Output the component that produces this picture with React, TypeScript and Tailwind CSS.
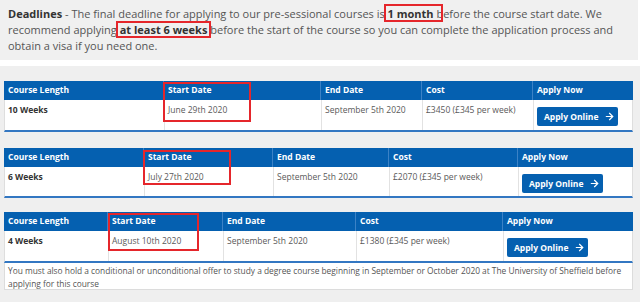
import React from 'react';
import { ArrowRight } from 'lucide-react';

type Course = {
  length: string;
  start: string;
  end: string;
  cost: string;
  cols: string;
  mark: string;
  bodyH: string;
  gap: string;
};

const COURSES: Course[] = [
  {
    length: '10 Weeks',
    start: 'June 29th 2020',
    end: 'September 5th 2020',
    cost: '£3450 (£345 per week)',
    cols: 'grid-cols-[159px_157px_101px_111px_101px]',
    mark: 'left-[159px] top-[1px] w-[88px] h-[40px]',
    bodyH: 'h-[32px]',
    gap: 'mt-[15px]',
  },
  {
    length: '6 Weeks',
    start: 'July 27th 2020',
    end: 'September 5th 2020',
    cost: '£2070 (£345 per week)',
    cols: 'grid-cols-[139px_129px_116px_129px_116px]',
    mark: 'left-[139px] top-[2px] w-[88px] h-[35px]',
    bodyH: 'h-[31px]',
    gap: 'mt-[16px]',
  },
  {
    length: '4 Weeks',
    start: 'August 10th 2020',
    end: 'September 5th 2020',
    cost: '£1380 (£345 per week)',
    cols: 'grid-cols-[103px_115px_133px_147px_131px]',
    mark: 'left-[104px] top-[1px] w-[91px] h-[38px]',
    bodyH: 'h-[32px]',
    gap: 'mt-[14px]',
  },
];

const HEADERS = ['Course Length', 'Start Date', 'End Date', 'Cost', 'Apply Now'];

// red annotation box drawn over a phrase, doesn't move the text
const Marked = ({ children, box }: { children: React.ReactNode; box: string }) => (
  <span className="relative font-bold text-[#333]">
    {children}
    <span className={`absolute border-2 border-[#e5262b] pointer-events-none ${box}`} />
  </span>
);

const CourseTable = ({ c }: { c: Course }) => (
  <div className={`relative w-[629px] ${c.gap}`}>
    <div className={`grid ${c.cols} h-[19px] bg-[#0560b0] text-white font-bold text-[8.5px]`}>
      {HEADERS.map((h, i) => (
        <div key={h} className={`flex items-center pl-[4px] ${i > 0 ? 'border-l border-[#3c82c6]' : ''}`}>
          {h}
        </div>
      ))}
    </div>
    <div className={`grid ${c.cols} ${c.bodyH} bg-white border-b-2 border-[#3377c2] border-x border-x-[#dedede] text-[8.5px] leading-[13px] text-[#5a5a5a]`}>
      <div className="pl-[3px] pt-[3px] font-bold text-[#333]">{c.length}</div>
      <div className="pl-[3px] pt-[3px] border-l border-[#e2e2e2]">{c.start}</div>
      <div className="pl-[3px] pt-[3px] border-l border-[#e2e2e2]">{c.end}</div>
      <div className="pl-[3px] pt-[3px] border-l border-[#e2e2e2]">{c.cost}</div>
      <div className="pl-[3px] pt-[7px] border-l border-[#e2e2e2]">
        <button className="flex items-center gap-[6px] h-[19px] w-[81px] pl-[7px] rounded-[2px] bg-[#0560b0] text-white font-bold text-[8.5px] whitespace-nowrap">
          Apply Online
          <ArrowRight size={11} strokeWidth={2.6} />
        </button>
      </div>
    </div>
    <div className={`absolute border-2 border-[#e5262b] ${c.mark}`} />
  </div>
);

const App = () => {
  return (
    <div className="w-[640px] h-[302px] overflow-hidden bg-[#efefef] font-['Open_Sans',sans-serif]">
      <div className="bg-white">
        <div className="w-[638px] h-[60px] bg-[#f0f0f0] pl-2 pr-[14px] pt-[6px] text-[11px] leading-[16px] text-[#555]">
          <span className="font-bold text-[#333]">Deadlines</span> - The final deadline for applying to our pre-sessional courses is{' '}
          <Marked box="-left-[4px] -right-[9px] -top-[2px] -bottom-[1px]">1 month</Marked> before the course start date. We recommend applying{' '}
          <Marked box="-left-[4px] -right-[4px] -top-[1px] -bottom-[1px]">at least 6 weeks</Marked> before the start of the course so you can complete the application process and obtain a visa if you need one.
        </div>
        <div className="h-[6px]" />
      </div>
      <div className="px-1">
        {COURSES.map((c) => (
          <CourseTable key={c.length} c={c} />
        ))}
        <div className="w-[629px] h-[27px] bg-white border-x border-b border-[#dcdcdc] pl-[3px] pr-px pt-px text-[8.4px] tracking-[-0.02px] leading-[13px] text-[#555]">
          You must also hold a conditional or unconditional offer to study a degree course beginning in September or October 2020 at The University of Sheffield before applying for this course
        </div>
      </div>
    </div>
  );
};

export default App;
